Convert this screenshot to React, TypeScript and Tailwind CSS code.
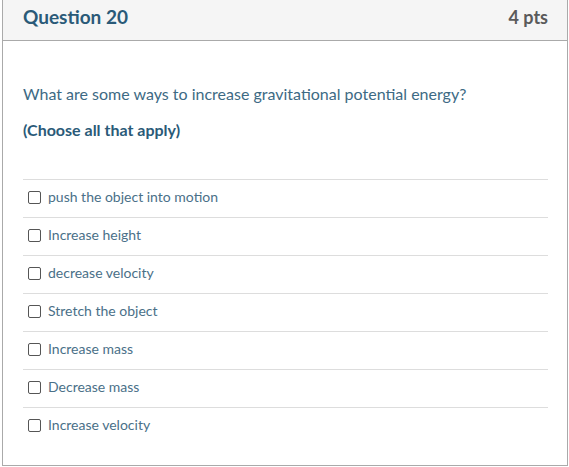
const answers = [
  "push the object into motion",
  "Increase height",
  "decrease velocity",
  "Stretch the object",
  "Increase mass",
  "Decrease mass",
  "Increase velocity",
];

export default function App() {
  return (
    <div className="w-[569px] h-[467px] bg-white font-['Lato',sans-serif]">
      <div className="ml-[2px] w-[566px] h-[466px] border-x border-b border-[#aaaaaa] flex flex-col">
        <div className="h-[41px] bg-[#f5f5f5] border-b border-[#aaaaaa] flex items-center justify-between pl-[20px] pr-[19px] pb-[6px]">
          <span className="text-[19px] font-bold text-[#2a5a78]">Question 20</span>
          <span className="text-[18px] font-bold text-[#5a5a5a]">4 pts</span>
        </div>
        <div className="px-[20px] pt-[41px]">
          <p className="text-[16px] leading-[24px] text-[#3d6a84]">
            What are some ways to increase gravitational potential energy?
          </p>
          <p className="mt-[12px] text-[16px] leading-[24px] font-bold text-[#2a5a78]">
            (Choose all that apply)
          </p>
          <div className="mt-[37px] mr-[-1px]">
            {answers.map((a) => (
              <label
                key={a}
                className="h-[38px] border-t border-[#dddddd] flex items-center gap-[7px] pl-[5px] pb-[5px] text-[14px] text-[#4a7088]"
              >
                <span className="w-[13px] h-[13px] mt-[2px] border border-[#555555] rounded-[2px] bg-white" />
                <span>{a}</span>
              </label>
            ))}
          </div>
        </div>
      </div>
    </div>
  );
}
